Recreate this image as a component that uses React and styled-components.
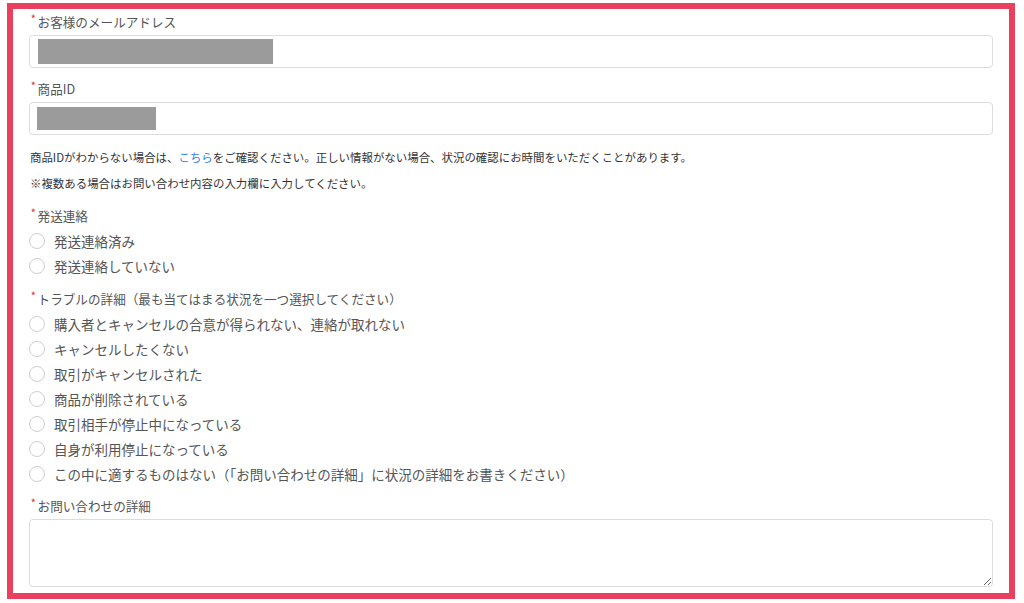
import React from "react";
import styled, { createGlobalStyle } from "styled-components";

const GlobalStyle = createGlobalStyle`
  html, body {
    margin: 0;
    padding: 0;
    background: #ffffff;
  }
  body {
    font-family: "Noto Sans CJK JP", "Noto Sans", "Liberation Sans", sans-serif;
    color: #4a4a4a;
  }
`;

const Frame = styled("div")`
  box-sizing: border-box;
  width: 1008px;
  height: 596px;
  margin: 3px 0 0 7px;
  border: 6px solid #e8405e;
  background: #fff;
  padding: 2px 16px 0 16px;
  display: flex;
  flex-direction: column;
`;

const Label = styled("div")`
  display: flex;
  align-items: center;
  height: 20px;
  font-size: 12.6px;
  color: #555;
  margin: ${props => props.$mt || 0}px 0 ${props => props.$mb || 4}px 0;
  padding-left: 2px;
`;

const Required = styled("span")`
  color: #e53935;
  font-size: 9px;
  font-weight: 700;
  margin-right: 2px;
  position: relative;
  top: -3px;
`;

const FieldBox = styled("div")`
  box-sizing: border-box;
  height: 33px;
  border: 1px solid #dcdcdc;
  border-radius: 4px;
  background: #fff;
  padding: ${props => props.$pt}px 0 0 ${props => props.$pl}px;
`;

const Redacted = styled("div")`
  background: #9b9b9b;
  height: ${props => props.$h}px;
  width: ${props => props.$w}px;
`;

const Help = styled("p")`
  margin: 0;
  font-size: 11.45px;
  line-height: 26px;
  color: #333;
  padding-left: 1px;
  white-space: nowrap;
`;

const Link = styled("a")`
  color: #2f80ed;
  text-decoration: none;
`;

const Options = styled("div")`
  display: flex;
  flex-direction: column;
`;

const Option = styled("label")`
  display: flex;
  align-items: center;
  height: 25px;
  font-size: 13.5px;
  color: #555;
  gap: 9px;
`;

const Circle = styled("span")`
  box-sizing: border-box;
  width: 16px;
  height: 16px;
  border-radius: 50%;
  border: 1px solid #cfcfcf;
  background: #fff;
  flex-shrink: 0;
`;

const Spacer = styled("div")`
  height: ${props => props.$h}px;
`;

const TextArea = styled("textarea")`
  box-sizing: border-box;
  display: block;
  width: 100%;
  height: 68px;
  border: 1px solid #dcdcdc;
  border-radius: 4px;
  background: #fff;
  margin: 0;
  font-family: inherit;
`;

const delivery = ["発送連絡済み", "発送連絡していない"];

const trouble = [
  "購入者とキャンセルの合意が得られない、連絡が取れない",
  "キャンセルしたくない",
  "取引がキャンセルされた",
  "商品が削除されている",
  "取引相手が停止中になっている",
  "自身が利用停止になっている",
  "この中に適するものはない（「お問い合わせの詳細」に状況の詳細をお書きください）"
];

const RadioGroup = ({ items }) => (
  <Options>
    {items.map(item => (
      <Option key={item}>
        <Circle />
        {item}
      </Option>
    ))}
  </Options>
);

const App = () => (
  <>
    <GlobalStyle />
    <Frame>
      <Label $mb={4}>
        <Required>*</Required>お客様のメールアドレス
      </Label>
      <FieldBox $pt={3} $pl={8}>
        <Redacted $w={235} $h={25} />
      </FieldBox>

      <Label $mt={10} $mb={4}>
        <Required>*</Required>商品ID
      </Label>
      <FieldBox $pt={4} $pl={7}>
        <Redacted $w={119} $h={23} />
      </FieldBox>

      <Spacer $h={9} />
      <Help>
        商品IDがわからない場合は、<Link href="#">こちら</Link>
        をご確認ください。正しい情報がない場合、状況の確認にお時間をいただくことがあります。
      </Help>
      <Help>※複数ある場合はお問い合わせ内容の入力欄に入力してください。</Help>

      <Label $mt={9} $mb={3}>
        <Required>*</Required>発送連絡
      </Label>
      <RadioGroup items={delivery} />

      <Label $mt={10} $mb={3}>
        <Required>*</Required>トラブルの詳細（最も当てはまる状況を一つ選択してください）
      </Label>
      <RadioGroup items={trouble} />

      <Label $mt={9} $mb={4}>
        <Required>*</Required>お問い合わせの詳細
      </Label>
      <TextArea />
    </Frame>
  </>
);

export default App;
